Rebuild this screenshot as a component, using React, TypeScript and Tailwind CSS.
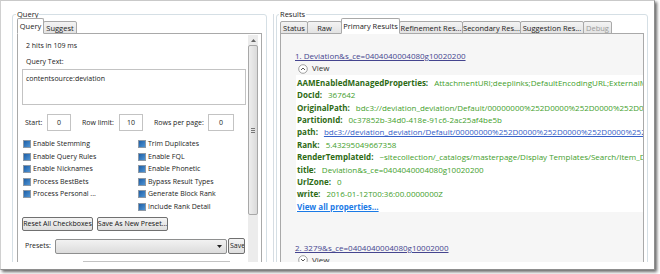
import React from 'react';

const leftChecks = ['Enable Stemming', 'Enable Query Rules', 'Enable Nicknames', 'Process BestBets', 'Process Personal ...'];
const rightChecks = [
  'Trim Duplicates',
  'Enable FQL',
  'Enable Phonetic',
  'Bypass Result Types',
  'Generate Block Rank',
  'Include Rank Detail'
];

interface Prop {
  name: string;
  value: string;
  link?: boolean;
}

const properties: Prop[] = [
  { name: 'AAMEnabledManagedProperties:', value: 'AttachmentURI;deeplinks;DefaultEncodingURL;ExternalMediaURL;HierarchyUrl;' },
  { name: 'DocId:', value: '367642' },
  {
    name: 'OriginalPath:',
    value: 'bdc3://deviation_deviation/Default/00000000%252D0000%252D0000%252D0000%252D000000000000/'
  },
  { name: 'PartitionId:', value: '0c37852b-34d0-418e-91c6-2ac25af4be5b' },
  {
    name: 'path:',
    value: 'bdc3://deviation_deviation/Default/00000000%252D0000%252D0000%252D0000%252D000000000000/',
    link: true
  },
  { name: 'Rank:', value: '5.43295049667358' },
  {
    name: 'RenderTemplateId:',
    value: '~sitecollection/_catalogs/masterpage/Display Templates/Search/Item_Default.js'
  },
  { name: 'title:', value: 'Deviation&s_ce=0404040004080g10020200' },
  { name: 'UrlZone:', value: '0' },
  { name: 'write:', value: '2016-01-12T00:36:00.0000000Z' }
];

function Checkbox({ label }: { label: string }) {
  return (
    <div className="flex items-center h-[12.5px] gap-[2px] whitespace-nowrap">
      <span className="w-[8px] h-[8px] border border-[#8d99a6] bg-[linear-gradient(135deg,#1d5ea6,#4f94d4)] shrink-0" />
      <span>{label}</span>
    </div>
  );
}

function Tab({ label, width, active, disabled }: { label: string; width: string; active?: boolean; disabled?: boolean }) {
  return (
    <div
      className={`${width} -ml-px first:ml-0 flex items-center justify-center whitespace-nowrap border border-[#a9a9a9] rounded-t-[2px]
        ${active ? 'h-[16px] bg-white border-b-white relative z-10' : 'h-[13px] bg-[linear-gradient(#f3f3f3,#e3e3e3)]'}
        ${disabled ? 'text-[#9a9a9a]' : 'text-[#222]'}`}
    >
      {label}
    </div>
  );
}

function ViewToggle({ open }: { open: boolean }) {
  return (
    <div className="flex items-center h-[12.4px] pl-[2px] gap-[4px] text-[#333]">
      <svg width="10" height="10" viewBox="0 0 10 10">
        <circle cx="5" cy="5" r="4.3" fill="#fff" stroke="#8a8a8a" strokeWidth="0.8" />
        {open ? (
          <path d="M3 6 L5 4 L7 6" fill="none" stroke="#444" strokeWidth="0.9" />
        ) : (
          <path d="M3 4 L5 6 L7 4" fill="none" stroke="#444" strokeWidth="0.9" />
        )}
      </svg>
      <span>View</span>
    </div>
  );
}

function Field({ value, width }: { value: string; width: string }) {
  return (
    <div className={`${width} h-[17px] border border-[#c3c3c3] bg-white flex items-center justify-center`}>{value}</div>
  );
}

function Button({ label, width }: { label: string; width: string }) {
  return (
    <div
      className={`${width} h-[14px] border border-[#707070] rounded-[2px] bg-[linear-gradient(#f4f4f4,#dedede)] flex items-center justify-center whitespace-nowrap text-[#111]`}
    >
      {label}
    </div>
  );
}

export default function App() {
  return (
    <div className="w-[660px] h-[274px] bg-white relative overflow-hidden font-['Open_Sans',sans-serif] text-[7.5px] text-[#1a1a1a] leading-[12px]">
      <div className="w-[655px] h-[270px] border border-[#8e8e8e] border-t-[#c9c9c9] border-l-[#d0d0d0] bg-white shadow-[2px_2px_3px_rgba(0,0,0,0.6)]">
        <div className="h-[261px] overflow-hidden flex pt-[13px]">
          {/* Query group */}
          <div className="ml-[11px] w-[255px] h-[262px] shrink-0 border border-[#d5dfe5] rounded-[3px] relative pt-[3px] px-[4px] flex flex-col">
            <span className="absolute -top-[7px] left-[3px] bg-white px-px text-[#222]">Query</span>
            <div className="flex items-end h-[16px] -mb-px">
              <Tab label="Query" width="w-[27px]" active />
              <Tab label="Suggest" width="w-[34px]" />
            </div>
            <div className="flex-1 border border-[#a9a9a9] bg-white flex text-[7px]">
              <div className="flex-1 min-w-0 overflow-hidden">
                <div className="mt-[6px] pl-[8px]">2 hits in 109 ms</div>
                <div className="mt-[4px] pl-[8px]">Query Text:</div>
                <div className="mt-[1px] ml-[4px] w-[224px] h-[36px] border border-[#c3c3c3] pl-[3px] pt-[3px]">
                  contentsource:deviation
                </div>
                <div className="mt-[9px] pl-[7px] flex items-center whitespace-nowrap">
                  <span className="w-[22px]">Start:</span>
                  <Field value="0" width="w-[24px]" />
                  <span className="ml-[11px] w-[37px]">Row limit:</span>
                  <Field value="10" width="w-[24px]" />
                  <span className="ml-[11px] w-[54px]">Rows per page:</span>
                  <Field value="0" width="w-[26px]" />
                </div>
                <div className="mt-[7px] pl-[5px] flex">
                  <div className="w-[115px]">
                    {leftChecks.map(c => (
                      <Checkbox key={c} label={c} />
                    ))}
                  </div>
                  <div>
                    {rightChecks.map(c => (
                      <Checkbox key={c} label={c} />
                    ))}
                  </div>
                </div>
                <div className="mt-[4px] pl-[4px] flex gap-[4px]">
                  <Button label="Reset All Checkboxes" width="w-[71px]" />
                  <Button label="Save As New Preset..." width="w-[71px]" />
                </div>
                <div className="mt-[7px] pl-[7px] flex items-center">
                  <span className="w-[30px]">Presets:</span>
                  <div className="w-[172px] h-[15px] border border-[#8e8f8f] rounded-[2px] bg-[linear-gradient(#f2f2f2,#dcdcdc)] flex items-center justify-end pr-[4px]">
                    <svg width="5" height="3" viewBox="0 0 5 3">
                      <path d="M0 0 H5 L2.5 3 Z" fill="#222" />
                    </svg>
                  </div>
                  <div className="ml-[1px] w-[17px] h-[16px] border border-[#707070] rounded-[2px] bg-[linear-gradient(#f4f4f4,#dedede)] overflow-hidden pl-[1px] flex items-center">
                    Save
                  </div>
                </div>
                <div className="mt-[7px] ml-[65px] w-[147px] h-[4px] border border-[#c3c3c3]" />
              </div>
              {/* scrollbar */}
              <div className="w-[10px] mt-[1px] mr-[3px] bg-[#ececec] flex flex-col items-center">
                <div className="h-[10px] flex items-center justify-center">
                  <svg width="5" height="3" viewBox="0 0 5 3">
                    <path d="M0 3 L2.5 0 L5 3 Z" fill="#666" />
                  </svg>
                </div>
                <div className="w-[10px] h-[170px] border border-[#a8a8a8] rounded-[2px] bg-[linear-gradient(90deg,#eeeeee,#dadada)] flex items-center justify-center">
                  <div className="w-[4px] flex flex-col gap-px">
                    <span className="h-px bg-[#777]" />
                    <span className="h-px bg-[#777]" />
                    <span className="h-px bg-[#777]" />
                  </div>
                </div>
              </div>
            </div>
          </div>

          {/* splitter */}
          <div className="ml-[6px] w-px h-[262px] bg-[#d6dde3] shrink-0" />

          {/* Results group */}
          <div className="ml-[2px] w-[372px] h-[262px] shrink-0 border border-[#d5dfe5] rounded-[3px] relative pt-[3px] px-[3px] flex flex-col">
            <span className="absolute -top-[7px] left-[2px] bg-white px-px text-[#222]">Results</span>
            <div className="flex items-end h-[16px] -mb-px">
              <Tab label="Status" width="w-[28px]" />
              <Tab label="Raw" width="w-[35px]" />
              <Tab label="Primary Results" width="w-[59px]" active />
              <Tab label="Refinement Res..." width="w-[64px]" />
              <Tab label="Secondary Res..." width="w-[59px]" />
              <Tab label="Suggestion Res..." width="w-[64px]" />
              <Tab label="Debug" width="w-[29px]" disabled />
            </div>
            <div className="flex-1 border border-[#a9a9a9] bg-[#f6f6f6] overflow-hidden leading-[12.4px] text-[8px]">
              <div className="mt-[16px] pl-[14px] text-[#45458f] underline whitespace-nowrap">
                1. Deviation&amp;s_ce=0404040004080g10020200
              </div>
              <div className="pl-[15px]">
                <ViewToggle open />
              </div>
              <div className="ml-[15px] bg-white pt-[2px] pl-px h-[137px]">
                {properties.map(p => (
                  <div key={p.name} className="flex gap-[6px] whitespace-nowrap">
                    <span className="font-bold text-[#2d6a14]">{p.name}</span>
                    <span className={p.link ? 'text-[#3560c8] underline' : 'text-[#43a02c]'}>{p.value}</span>
                  </div>
                ))}
                <div className="font-bold text-[#1a7ae6] underline">View all properties...</div>
              </div>
              <div className="mt-[30px] pl-[14px] text-[#45458f] underline whitespace-nowrap">
                2. 3279&amp;s_ce=0404040004080g10002000
              </div>
              <div className="pl-[15px]">
                <ViewToggle open={false} />
              </div>
            </div>
          </div>
        </div>
      </div>
    </div>
  );
}
